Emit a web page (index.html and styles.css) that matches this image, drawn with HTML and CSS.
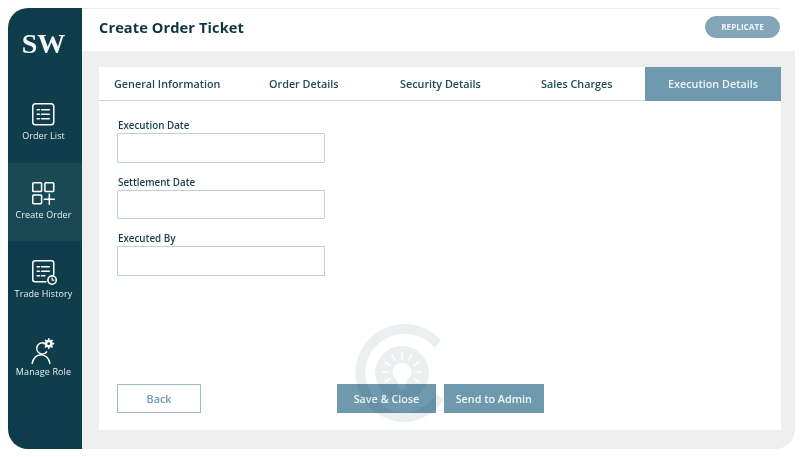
FILE: index.html
```html
<!DOCTYPE html>
<html lang="en">
<head>
<meta charset="utf-8">
<title>Create Order Ticket</title>
<link rel="stylesheet" href="styles.css">
</head>
<body>
<div class="app">
  <aside class="sidebar">
    <div class="logo">SW</div>
    <nav class="nav">
      <a class="nav-item">
        <svg class="nav-icon" viewBox="0 0 24 24"><rect x="2.500" y="2.500" width="19" height="19" rx="2.500"/><path d="M6.500 8h2M10.500 8h7M6.500 12h2M10.500 12h7M6.500 16h2M10.500 16h7"/></svg>
        <span>Order List</span>
      </a>
      <a class="nav-item active">
        <svg class="nav-icon" viewBox="0 0 24 24"><rect x="2.500" y="2.500" width="8" height="8" rx=".8"/><rect x="13.500" y="2.500" width="8" height="8" rx=".8"/><rect x="2.500" y="13.500" width="8" height="8" rx=".8"/><path d="M17.500 13v9M13 17.500h9"/></svg>
        <span>Create Order</span>
      </a>
      <a class="nav-item">
        <svg class="nav-icon" viewBox="0 0 24 24"><path d="M14.500 21.500H4.500a2 2 0 0 1-2-2v-15a2 2 0 0 1 2-2h15a2 2 0 0 1 2 2V15"/><path d="M6.500 8h2M10.500 8h7M6.500 12h2M10.500 12h7M6.500 16h2M10.500 16h3"/><circle cx="20" cy="20" r="3.800"/><path d="M20 18v2h1.700" stroke-width="1"/></svg>
        <span>Trade History</span>
      </a>
      <a class="nav-item">
        <svg class="nav-icon" viewBox="0 0 24 24"><path d="M12.500 5.500a5 5 0 1 0 2.500 8"/><path d="M2 24c.8-5 4.200-8 8-8s7.200 3 8 8"/><circle cx="17" cy="6" r="2.400" stroke-width="2.200"/><path d="M17 1.700v1.500M17 8.800v1.500M12.700 6h1.500M19.800 6h1.500M14 3l1 1M19 8l1 1M14 9l1-1M19 4l1-1" stroke-width="1.500"/></svg>
        <span>Manage Role</span>
      </a>
    </nav>
  </aside>
  <main class="main">
    <header class="topbar">
      <h1 class="title">Create Order Ticket</h1>
      <button class="replicate">REPLICATE</button>
    </header>
    <div class="content">
      <section class="card">
        <div class="tabs">
          <div class="tab tab-general">General Information</div>
          <div class="tab tab-order">Order Details</div>
          <div class="tab tab-security">Security Details</div>
          <div class="tab tab-sales">Sales Charges</div>
          <div class="tab tab-active">Execution Details</div>
        </div>
        <form class="form">
          <div class="fields">
            <label class="field"><span>Execution Date</span><input class="input" type="text"></label>
            <label class="field"><span>Settlement Date</span><input class="input" type="text"></label>
            <label class="field"><span>Executed By</span><input class="input" type="text"></label>
          </div>
          <div class="actions">
            <button type="button" class="btn btn-back">Back</button>
            <button type="button" class="btn btn-save">Save &amp; Close</button>
            <button type="button" class="btn btn-send">Send to Admin</button>
          </div>
        </form>
        <svg class="watermark" viewBox="0 0 100 100">
          <path d="M85.500 20.500A45 45 0 1 0 50 95a45 45 0 0 0 38-21" fill="none" stroke="#e6eaeb" stroke-width="10"/>
          <circle cx="49" cy="50" r="27.500" fill="#e6eaeb"/>
          <path d="M49 39.500a9.500 9.500 0 0 0-6.500 16.400c1.500 1.500 2.500 3 2.500 5v6h8v-6c0-2 1-3.500 2.500-5a9.500 9.500 0 0 0-6.500-16.400z" fill="#fff"/>
          <path d="M49 35v-6M56 36.900l3-5.200M42 36.900l-3-5.200M61.100 42l5.200-3M36.900 42l-5.200-3M63 49h6M35 49h-6M61.100 56l5.200 3M36.900 56l-5.200 3" stroke="#fff" stroke-width="1.700" stroke-linecap="round"/>
        </svg>
      </section>
    </div>
  </main>
</div>
</body>
</html>
```
FILE: styles.css
```css
* { box-sizing: border-box; }
html, body { margin: 0; height: 100%; background: #fff; }
body { padding: 8px; font-family: "Open Sans", "Liberation Sans", sans-serif; overflow: hidden; }
.app { display: flex; width: 787px; height: 441px; border-radius: 20px; overflow: hidden; }
.sidebar { width: 74px; flex: none; background: #0f3d4c; color: #fff; display: flex; flex-direction: column; }
.logo { height: 70px; display: flex; align-items: center; justify-content: center; padding: 1px 3px 0 0; font-family: "Liberation Serif", serif; font-weight: 700; font-size: 28px; color: #f4f8f8; }
.nav { display: flex; flex-direction: column; }
.nav-item { height: 78.500px; display: flex; flex-direction: column; align-items: center; justify-content: center; gap: 2px; padding: 0 3px 3px 0; font-size: 9px; font-weight: 400; color: #e8eff1; letter-spacing: .1px; white-space: nowrap; }
.nav-item:first-child { height: 84.500px; padding: 2px 3px 0 0; }
.nav-item.active { background: #1b4855; }
.nav-icon { width: 26.500px; height: 26.500px; fill: none; stroke: #fff; stroke-width: 1.400; stroke-linecap: round; stroke-linejoin: round; overflow: visible; }
.main { flex: 1; display: flex; flex-direction: column; background: #eeeeee; min-width: 0; }
.topbar { height: 43px; flex: none; background: #fff; border-top: 1px solid #ececec; display: flex; align-items: center; justify-content: space-between; padding: 0 15px 7px 17px; }
.title { margin: 0; font-size: 14.600px; font-weight: 700; color: #0f3442; letter-spacing: .1px; }
.replicate { width: 75px; height: 22px; border: 1px solid #7ea3b4; border-radius: 11px; background: #82a6b7; color: #eef4f6; font: 700 8.200px "Open Sans", sans-serif; padding: 0; }
.content { flex: 1; padding: 16px 14px 19px 17px; min-height: 0; }
.card { position: relative; height: 100%; background: #fff; display: flex; flex-direction: column; }
.tabs { display: flex; height: 34px; flex: none; border-bottom: 1px solid #c9d8de; }
.tab { display: flex; align-items: center; font-size: 10.800px; font-weight: 600; color: #1f4a58; white-space: nowrap; }
.tab-general { width: 170px; padding-left: 15px; }
.tab-order { width: 131px; }
.tab-security { width: 141px; }
.tab-sales { width: 104px; }
.tab-active { flex: 1; justify-content: center; background: #6f9aae; color: #eef4f6; height: 34px; padding-bottom: 1px; }
.form { flex: 1; display: flex; flex-direction: column; justify-content: space-between; padding: 18px 18px 17px; min-height: 0; position: relative; }
.fields { display: flex; flex-direction: column; gap: 13px; }
.field { display: flex; flex-direction: column; width: 208px; gap: 1px; font-size: 9.800px; font-weight: 600; color: #153e4c; line-height: 13px; }
.field span { padding-left: 1px; }
.input { height: 29.500px; width: 100%; border: 1px solid #bfd0d7; background: #fff; border-radius: 1px; padding: 0 6px; }
.actions { display: flex; align-items: center; height: 29px; }
.btn { height: 29px; font: 600 10.800px "Open Sans", sans-serif; padding: 0; }
.btn-back { width: 84px; background: #fff; border: 1px solid #9cbac7; color: #6f9aae; margin-right: 136px; }
.btn-save { width: 99px; background: #6f9aae; border: 1px solid #6f9aae; color: #f2f6f8; margin-right: 8px; }
.btn-send { width: 99.500px; background: #6f9aae; border: 1px solid #6f9aae; color: #f2f6f8; }
.watermark { position: absolute; left: 255px; bottom: 8px; width: 98px; height: 98px; opacity: .75; mix-blend-mode: multiply; pointer-events: none; }
```
